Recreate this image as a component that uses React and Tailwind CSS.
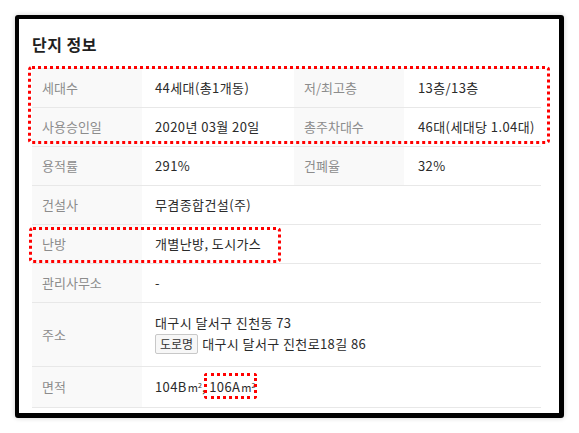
import React from "react";

const font = { fontFamily: '"Noto Sans CJK KR", "Noto Sans", sans-serif' };

function Label({ children, className = "" }) {
  return (
    <div className={"flex items-center bg-[#f9f9f9] pl-[10px] text-[13px] text-[#8c8c8c] border-b border-[#e8e8e8] " + className}>
      {children}
    </div>
  );
}

function Value({ children, className = "" }) {
  return (
    <div className={"flex items-center pl-[13px] text-[13px] tracking-[0.4px] text-[#2a2a2a] border-b border-[#e8e8e8] " + className}>
      {children}
    </div>
  );
}

function M2() {
  return (
    <span className="text-[11px] ml-[1px] tracking-normal">
      m<sup className="text-[7px]">2</sup>
    </span>
  );
}

export default function App() {
  return (
    <div className="bg-white w-[579px] h-[433px] pl-[15px] pt-[15px]" style={font}>
      <div className="relative w-[549px] h-[403px] bg-white border-[4px] border-r-[5px] border-b-[5px] border-black rounded-[3px] shadow-[0_0_5px_rgba(0,0,0,0.2)] pl-[13px] pr-[18px]">
        <div className="h-[49px] flex items-center pt-[1px]">
          <h2 className="text-[16px] font-bold text-[#1f1f1f] tracking-[0.5px]">단지 정보</h2>
        </div>
        <div className="grid grid-cols-[110px_152px_110px_137px] border-t border-[#e8e8e8]">
          <Label className="h-[39px]">세대수</Label>
          <Value className="h-[39px]">44세대(총1개동)</Value>
          <Label className="h-[39px] pl-[9px]">저/최고층</Label>
          <Value className="h-[39px] pl-[14px]">13층/13층</Value>

          <Label className="h-[39px]">사용승인일</Label>
          <Value className="h-[39px]">2020년 03월 20일</Value>
          <Label className="h-[39px] pl-[9px]">총주차대수</Label>
          <Value className="h-[39px] pl-[14px]">46대(세대당 1.04대)</Value>

          <Label className="h-[39px]">용적률</Label>
          <Value className="h-[39px]">291%</Value>
          <Label className="h-[39px] pl-[9px]">건폐율</Label>
          <Value className="h-[39px] pl-[14px]">32%</Value>

          <Label className="h-[39px]">건설사</Label>
          <Value className="h-[39px] col-span-3">무겸종합건설(주)</Value>

          <Label className="h-[39px]">난방</Label>
          <Value className="h-[39px] col-span-3">개별난방, 도시가스</Value>

          <Label className="h-[39px]">관리사무소</Label>
          <Value className="h-[39px] col-span-3">-</Value>

          <Label className="h-[64px]">주소</Label>
          <div className="h-[64px] col-span-3 flex flex-col justify-center pl-[13px] pb-[3px] text-[13px] tracking-[0.4px] text-[#2a2a2a] border-b border-[#e8e8e8]">
            <div className="h-[21px] leading-[21px]">대구시 달서구 진천동 73</div>
            <div className="h-[22px] flex items-center">
              <span className="inline-flex items-center h-[20px] px-[4px] mr-[4px] border border-[#c8c8c8] bg-[#f7f7f7] text-[12px] tracking-normal text-[#333] rounded-[2px]">도로명</span>
              대구시 달서구 진천로18길 86
            </div>
          </div>

          <Label className="h-[41px]">면적</Label>
          <Value className="h-[41px] col-span-3">
            104B<M2 />, 106A<M2 />
          </Value>
        </div>

        <div className="absolute left-[9px] top-[47px] w-[522px] h-[78px] border-[3px] border-dotted border-[#ff0000] rounded-[4px] pointer-events-none" />
        <div className="absolute left-[10px] top-[208px] w-[252px] h-[36px] border-[3px] border-dotted border-[#ff0000] rounded-[4px] pointer-events-none" />
        <div className="absolute left-[185px] top-[354px] w-[53px] h-[26px] border-[3px] border-dotted border-[#ff0000] rounded-[3px] pointer-events-none" />
      </div>
    </div>
  );
}
